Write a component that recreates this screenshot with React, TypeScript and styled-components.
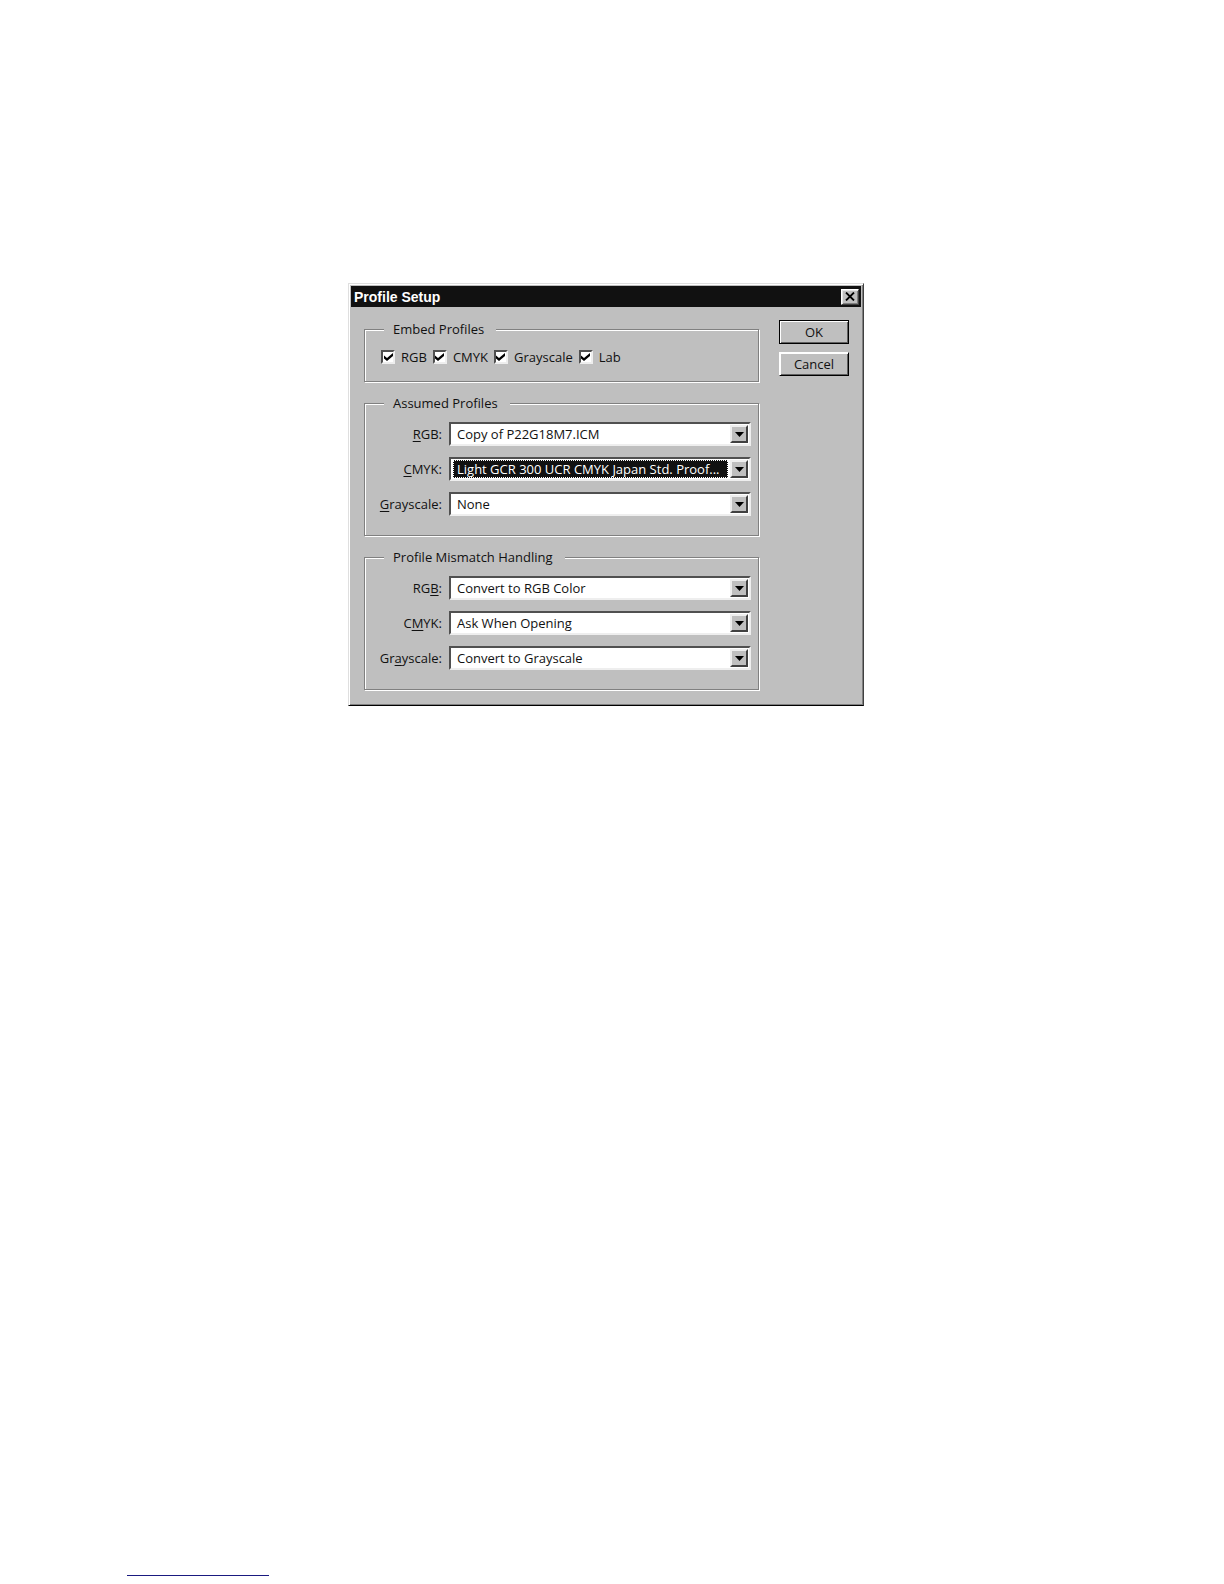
import { ReactNode, useId } from 'react';
import styled, { createGlobalStyle } from 'styled-components';

const embedOptions = ['RGB', 'CMYK', 'Grayscale', 'Lab'];

const assumedProfiles = [
    { label: ['', 'R', 'GB:'], value: 'Copy of P22G18M7.ICM' },
    { label: ['', 'C', 'MYK:'], value: 'Light GCR 300 UCR CMYK Japan Std. Proof...', active: true },
    { label: ['', 'G', 'rayscale:'], value: 'None' },
];

const mismatchHandling = [
    { label: ['RG', 'B', ':'], value: 'Convert to RGB Color' },
    { label: ['C', 'M', 'YK:'], value: 'Ask When Opening' },
    { label: ['Gr', 'a', 'yscale:'], value: 'Convert to Grayscale' },
];

type Field = { label: string[]; value: string; active?: boolean };

const SelectRow = ({ label, value, active = false }: Field) => {
    const id = useId();
    const [before, key, after] = label;

    return (
        <Row>
            <RowLabel htmlFor={id}>
                {before}
                <u>{key}</u>
                {after}
            </RowLabel>
            <SelectBox>
                <Select id={id} $active={active} defaultValue={value}>
                    <option>{value}</option>
                </Select>
                {active && <FocusRing />}
                <ArrowButton>
                    <svg width="9" height="5" viewBox="0 0 9 5" aria-hidden="true">
                        <path d="M0 0h9L4.5 5z" fill="#000" />
                    </svg>
                </ArrowButton>
            </SelectBox>
        </Row>
    );
};

const Group = ({ title, children }: { title: string; children: ReactNode }) => (
    <Fieldset>
        <Legend>{title}</Legend>
        {children}
    </Fieldset>
);

const App = () => {
    return (
        <Page>
            <GlobalStyle />
            <Dialog role="dialog" aria-label="Profile Setup">
                <TitleBar>
                    <Title>Profile Setup</Title>
                    <CloseButton type="button" aria-label="Close">
                        <svg width="10" height="9" viewBox="0 0 10 9" aria-hidden="true">
                            <path d="M1 0.5l8 8M9 0.5l-8 8" stroke="#000" strokeWidth="1.8" />
                        </svg>
                    </CloseButton>
                </TitleBar>
                <Body>
                    <Groups>
                        <Group title="Embed Profiles">
                            <CheckRow>
                                {embedOptions.map((name) => (
                                    <CheckLabel key={name}>
                                        <Checkbox type="checkbox" defaultChecked />
                                        <CheckMark viewBox="0 0 9 8" aria-hidden="true">
                                            <path d="M0 2.5v3L3 8l6-5V0L3 5z" fill="#000" />
                                        </CheckMark>
                                        {name}
                                    </CheckLabel>
                                ))}
                            </CheckRow>
                        </Group>
                        <Group title="Assumed Profiles">
                            <Rows>
                                {assumedProfiles.map((field) => (
                                    <SelectRow key={field.value} {...field} />
                                ))}
                            </Rows>
                        </Group>
                        <Group title="Profile Mismatch Handling">
                            <Rows>
                                {mismatchHandling.map((field) => (
                                    <SelectRow key={field.value} {...field} />
                                ))}
                            </Rows>
                        </Group>
                    </Groups>
                    <Actions>
                        <Button type="button" $primary>
                            OK
                        </Button>
                        <Button type="button">Cancel</Button>
                    </Actions>
                </Body>
            </Dialog>
            <FooterLink href="#" aria-label="Home" />
        </Page>
    );
};

const GlobalStyle = createGlobalStyle`
    * {
        box-sizing: border-box;
    }

    body {
        margin: 0;
        background: #fff;
        color: #111;
        font-family: 'Open Sans', 'Liberation Sans', sans-serif;
        font-size: 13px;
        line-height: 18px;
    }

    button,
    select {
        font: inherit;
        color: inherit;
    }
`;

const Page = styled.main`
    min-height: 100vh;
    padding: 283px 139px 8px 127px;
    display: flex;
    flex-direction: column;
    justify-content: space-between;
`;

const Dialog = styled.section`
    align-self: center;
    width: 100%;
    max-width: 516px;
    padding: 1px;
    background: #bfbfbf;
    border: 1px solid;
    border-color: #dfdfdf #404040 #000 #dfdfdf;
    box-shadow: inset 1px 1px 0 #fff, inset -1px -1px 0 #808080;
`;

const TitleBar = styled.header`
    display: flex;
    align-items: center;
    justify-content: space-between;
    height: 21px;
    margin: 1px;
    padding: 0 2px 0 3px;
    background: #111;
    color: #fff;
`;

const Title = styled.h1`
    margin: 0;
    font-family: 'Liberation Sans', sans-serif;
    font-size: 14px;
    line-height: 20px;
    font-weight: 700;
`;

const CloseButton = styled.button`
    display: flex;
    align-items: center;
    justify-content: center;
    width: 18px;
    height: 16px;
    padding: 0;
    background: #bfbfbf;
    border: 1px solid;
    border-color: #fff #404040 #404040 #fff;
    box-shadow: inset 1px 1px 0 #e4e4e4, inset -1px -1px 0 #808080;
`;

const Body = styled.div`
    display: flex;
    align-items: flex-start;
    gap: 20px;
    padding: 12px 13px 14px 14px;
`;

const Groups = styled.div`
    flex: 1;
    min-width: 0;
    display: flex;
    flex-direction: column;
    gap: 12px;
`;

const Fieldset = styled.fieldset`
    min-width: 0;
    margin: 0;
    padding: 10px 7px 19px 9px;
    border: 1px solid #808080;
    box-shadow: 1px 1px 0 #fff, inset 1px 1px 0 #fff;
`;

const Legend = styled.legend`
    margin-left: 10px;
    padding: 0 12px 0 9px;
    background: #bfbfbf;
`;

const CheckRow = styled.div`
    display: flex;
    flex-wrap: wrap;
    gap: 6px;
    margin-bottom: -4px;
    padding-left: 7px;
`;

const CheckLabel = styled.label`
    display: grid;
    grid-template-columns: 14px auto;
    align-items: center;
    column-gap: 6px;
`;

const Checkbox = styled.input`
    appearance: none;
    grid-area: 1 / 1;
    width: 14px;
    height: 14px;
    margin: 0;
    background: #fff;
    border: 2px solid;
    border-color: #505050 #eee #eee #505050;
`;

const CheckMark = styled.svg`
    grid-area: 1 / 1;
    justify-self: center;
    width: 9px;
    height: 8px;
    pointer-events: none;
    visibility: hidden;

    ${Checkbox}:checked + & {
        visibility: visible;
    }
`;

const Rows = styled.div`
    display: flex;
    flex-direction: column;
    gap: 11px;
`;

const Row = styled.div`
    display: grid;
    grid-template-columns: 68px 1fr;
    align-items: center;
    column-gap: 7px;
`;

const RowLabel = styled.label`
    text-align: right;
    white-space: nowrap;

    u {
        text-underline-offset: 2px;
    }
`;

const SelectBox = styled.div`
    display: grid;
    height: 24px;
    padding: 1px;
    background: #fff;
    border: 2px solid;
    border-color: #505050 #eee #eee #505050;
`;

const Select = styled.select<{ $active: boolean }>`
    appearance: none;
    grid-area: 1 / 1;
    min-width: 0;
    padding: 0 20px 0 1px;
    border: 0;
    border-radius: 0;
    outline: 0;
    text-indent: 4px;
    line-height: 18px;
    color: ${({ $active }) => ($active ? '#fff' : '#111')};
    background: ${({ $active }) => ($active ? '#111 content-box' : '#fff')};
`;

const FocusRing = styled.span`
    grid-area: 1 / 1;
    margin: 0 20px 0 1px;
    border: 1px dotted #fff;
    pointer-events: none;
`;

const ArrowButton = styled.span`
    grid-area: 1 / 1;
    justify-self: end;
    display: flex;
    align-items: center;
    justify-content: center;
    width: 18px;
    background: #bfbfbf;
    border: 2px solid;
    border-color: #eee #404040 #404040 #eee;
    pointer-events: none;
`;

const Actions = styled.div`
    display: flex;
    flex-direction: column;
    gap: 8px;
    width: 70px;
`;

const Button = styled.button<{ $primary?: boolean }>`
    height: 24px;
    padding: 0;
    background: #bfbfbf;
    border: 1px solid;
    border-color: ${({ $primary }) => ($primary ? '#000' : '#fff #000 #000 #fff')};
    box-shadow: inset 1px 1px 0 #fff, inset -1px -1px 0 #606060;
`;

const FooterLink = styled.a`
    width: 142px;
    height: 18px;
    border-bottom: 1px solid #1a1a80;
`;

export default App;
